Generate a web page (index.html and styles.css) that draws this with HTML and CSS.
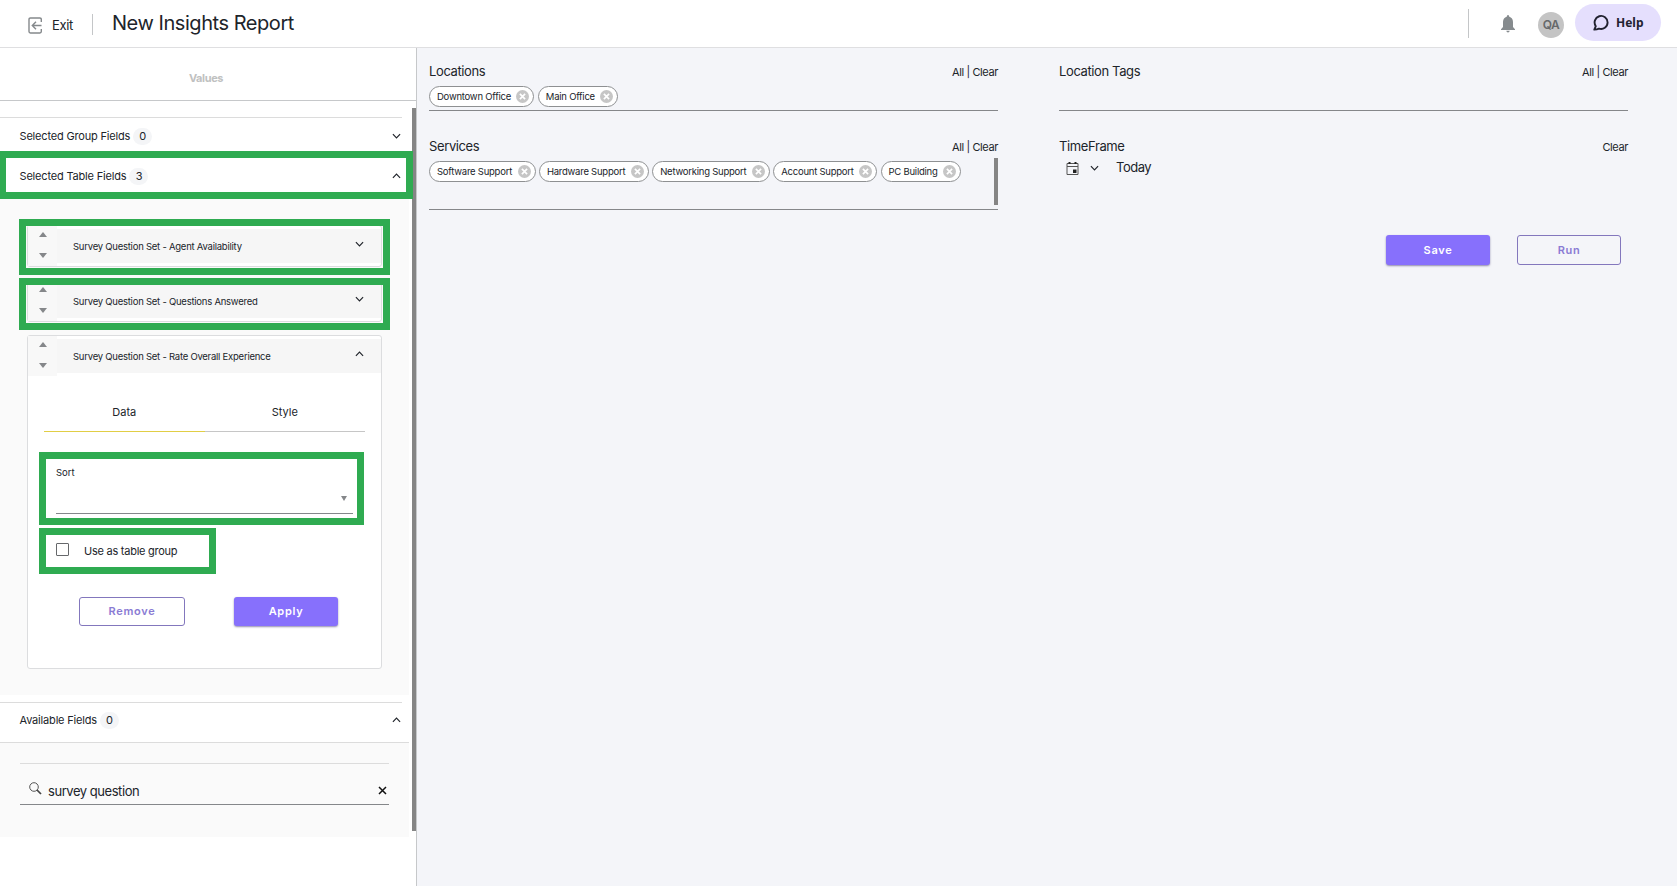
FILE: index.html
```html
<!DOCTYPE html>
<html lang="en">

<head>
	<meta charset="UTF-8">
	<title>New Insights Report</title>
	<link rel="stylesheet" href="styles.css">
</head>

<body>
	<!-- shared icons -->
	<svg class="defs">
		<symbol id="down" viewBox="0 0 10 6"><path d="M1 1l4 4 4-4" fill="none" stroke="currentColor" stroke-width="1.3" /></symbol>
		<symbol id="up" viewBox="0 0 10 6"><path d="M1 5l4-4 4 4" fill="none" stroke="currentColor" stroke-width="1.3" /></symbol>
		<symbol id="remove" viewBox="0 0 14 14"><circle cx="7" cy="7" r="7" fill="#c6c6c6" /><path d="M4.200 4.200l5.600 5.600M9.800 4.200l-5.600 5.600" stroke="#fff" stroke-width="1.800" /></symbol>
	</svg>

	<header class="top">
		<a class="exit" href="#">
			<svg width="15" height="17" viewBox="0 0 15 17" fill="none" stroke="#85898c" stroke-width="1.4">
				<path d="M13.3 5V2.4Q13.3 1 11.9 1H2.4Q1 1 1 2.4v12.2Q1 16 2.4 16h9.5q1.4 0 1.4-1.4V12M13.5 8.5H4.6M8 4.8L4.3 8.5 8 12.2" />
			</svg>
			<span>Exit</span>
		</a>
		<h1>New Insights Report</h1>
		<div class="tools">
			<svg class="bell" width="14" height="18" viewBox="0 0 14 18" fill="#868b8e">
				<path d="M7 0q1.2 0 1.3 1.7Q11.8 2.5 12 7v5l2 2.2v.8H0v-.8L2 12V7q.2-4.500 3.700-5.300Q5.800 0 7 0zM5.300 15.800h3.400Q8.500 17.500 7 17.500t-1.700-1.700z" />
			</svg>
			<span class="avatar">QA</span>
			<a class="help" href="#">
				<svg width="17" height="17" viewBox="0 0 17 17" fill="none" stroke="#222230" stroke-width="1.9" stroke-linejoin="round">
					<path d="M1.300 15.600l1.500-3.400A6.500 6.500 0 1 1 6 14.600q-2 .9-4.700 1z" />
				</svg>
				<span>Help</span>
			</a>
		</div>
	</header>

	<div class="page">
		<aside class="side">
			<div class="values">Values</div>
			<div class="scroller">
				<div class="row first">
					<span>Selected Group Fields</span><b>0</b>
					<svg class="chev"><use href="#down" /></svg>
				</div>
				<div class="row mark table-row">
					<span>Selected Table Fields</span><b>3</b>
					<svg class="chev"><use href="#up" /></svg>
				</div>

				<div class="fields">
					<div class="card small mark">
						<div class="card-head">
							<div class="arrows"><i class="up"></i><i class="down"></i></div>
							<div class="card-title"><span>Survey Question Set - Agent Availability</span><svg class="chev"><use href="#down" /></svg></div>
						</div>
					</div>
					<div class="card small mark second">
						<div class="card-head">
							<div class="arrows"><i class="up"></i><i class="down"></i></div>
							<div class="card-title"><span>Survey Question Set - Questions Answered</span><svg class="chev"><use href="#down" /></svg></div>
						</div>
					</div>
					<div class="card open">
						<div class="card-head">
							<div class="arrows"><i class="up"></i><i class="down"></i></div>
							<div class="card-title"><span>Survey Question Set - Rate Overall Experience</span><svg class="chev"><use href="#up" /></svg></div>
						</div>
						<div class="tabs">
							<span class="current">Data</span>
							<span>Style</span>
						</div>
						<div class="sort mark">
							<label>Sort</label>
							<div class="select"><i></i></div>
						</div>
						<label class="check mark"><i></i><span>Use as table group</span></label>
						<div class="card-btns">
							<button class="btn line">Remove</button>
							<button class="btn full">Apply</button>
						</div>
					</div>
				</div>

				<div class="row available">
					<span>Available Fields</span><b>0</b>
					<svg class="chev"><use href="#up" /></svg>
				</div>
				<div class="search-area">
					<div class="search">
						<svg width="13" height="13" viewBox="0 0 13 13" fill="none" stroke="#444"><circle cx="5" cy="5" r="4.300" stroke-width=".9" /><path d="M8 8l4 4" stroke-width="1.700" /></svg>
						<span>survey question</span>
						<svg class="clear" width="9" height="9" viewBox="0 0 9 9" stroke="#111" stroke-width="1.500"><path d="M1 1l7 7M8 1L1 8" /></svg>
					</div>
				</div>
				<div class="bar"></div>
			</div>
		</aside>

		<main class="main">
			<div class="filters">
				<section>
					<div class="label"><h2>Locations</h2><span>All | Clear</span></div>
					<div class="chips">
						<span class="chip">Downtown Office<svg><use href="#remove" /></svg></span>
						<span class="chip">Main Office<svg><use href="#remove" /></svg></span>
					</div>
				</section>
				<section>
					<div class="label"><h2>Location Tags</h2><span>All | Clear</span></div>
					<div class="chips"></div>
				</section>
				<section>
					<div class="label"><h2>Services</h2><span>All | Clear</span></div>
					<div class="chips tall">
						<span class="chip">Software Support<svg><use href="#remove" /></svg></span>
						<span class="chip">Hardware Support<svg><use href="#remove" /></svg></span>
						<span class="chip">Networking Support<svg><use href="#remove" /></svg></span>
						<span class="chip">Account Support<svg><use href="#remove" /></svg></span>
						<span class="chip">PC Building<svg><use href="#remove" /></svg></span>
						<div class="chips-bar"></div>
					</div>
				</section>
				<section>
					<div class="label"><h2>TimeFrame</h2><span>Clear</span></div>
					<div class="time">
						<svg width="13" height="13" viewBox="0 0 13 13"><path d="M1 1.500h11v11H1zM1 4.500h11" fill="none" stroke="#555" /><path d="M2.500 0h2v2h-2zM8.500 0h2v2h-2zM7 7.500h3.500V11H7z" fill="#222" /></svg>
						<svg class="chev"><use href="#down" /></svg>
						<span>Today</span>
					</div>
				</section>
			</div>
			<div class="actions">
				<button class="btn full">Save</button>
				<button class="btn line">Run</button>
			</div>
		</main>
	</div>
</body>

</html>
```
FILE: styles.css
```css
*,
*::before,
*::after {
	margin: 0;
	padding: 0;
	box-sizing: border-box;
}

body {
	height: 886px;
	overflow: hidden;
	background: #fff;
	color: #20242a;
	font-family: Inter, "Liberation Sans", sans-serif;
	font-size: 11px;
}

svg {
	flex: none;
}

a {
	color: inherit;
	text-decoration: none;
}

.defs {
	display: none;
}

/* header */
.top {
	display: flex;
	height: 48px;
	border-bottom: 1px solid #dfdfe1;
}

.exit {
	display: flex;
	align-items: center;
	gap: 9px;
	width: 93px;
	height: 21px;
	margin-top: 14px;
	padding-left: 28px;
	border-right: 1px solid #c4c6c8;
	font-size: 13px;
	letter-spacing: -.35px;
}

.exit svg {
	margin-top: 2px;
}

.exit span {
	margin-top: 1px;
}

h1 {
	margin-left: 19px;
	font-size: 20px;
	line-height: 46px;
	font-weight: 400;
	letter-spacing: -.45px;
}

.tools {
	display: flex;
	margin-left: auto;
	margin-right: 16px;
}

.bell {
	margin: 15px 36px 0 0;
}

.tools::before {
	content: "";
	width: 1px;
	height: 29px;
	margin: 9px 32px 0 0;
	background: #c4c6c8;
}

.avatar {
	width: 26px;
	height: 26px;
	margin: 12px 11px 0 -13px;
	border-radius: 50%;
	background: #c4c4c4;
	color: #66696b;
	font-size: 12px;
	font-weight: 600;
	line-height: 25px;
	text-align: center;
	letter-spacing: -.6px;
}

.help {
	display: flex;
	align-items: center;
	gap: 6px;
	width: 86px;
	height: 37px;
	margin-top: 4px;
	padding-left: 18px;
	border-radius: 19px;
	background: #e5dffd;
	color: #222230;
	font: bold 12px "Noto Sans", sans-serif;
}

.help svg {
	margin-bottom: 1px;
}

/* left panel */
.page {
	display: flex;
	height: 838px;
}

.side {
	width: 417px;
	border-right: 1px solid #c6c8ca;
}

.values {
	height: 53px;
	padding-right: 4px;
	border-bottom: 1px solid #c6c8ca;
	color: #bfc1c1;
	font-weight: 700;
	line-height: 60px;
	text-align: center;
	letter-spacing: -.4px;
}

.scroller {
	position: relative;
	padding-top: 16px;
}

.bar {
	position: absolute;
	top: 7px;
	right: 0;
	width: 4px;
	height: 723px;
	background: #858585;
}

.row {
	display: flex;
	align-items: center;
	width: 402px;
	padding: 0 1px 0 19.5px;
	letter-spacing: -.18px;
}

.row b {
	width: 19px;
	height: 17px;
	margin-left: 3px;
	border-radius: 9px;
	background: #f4f5f7;
	font-weight: 400;
	line-height: 17px;
	text-align: center;
}

.row .chev {
	margin-left: auto;
}

.chev {
	width: 9px;
	height: 6px;
}

.first {
	height: 41px;
	padding-bottom: 4px;
	border-top: 1px solid #dcdcdc;
}

.table-row {
	height: 34px;
	padding-top: 2px;
}

/* green frame round the highlighted parts */
.mark {
	position: relative;
}

.mark::after {
	content: "";
	position: absolute;
	z-index: 1;
	border: 7px solid #2fab51;
}

.table-row::after {
	top: -7px;
	left: 0;
	width: 413px;
	height: 48px;
	border-left-width: 6px;
}

.fields {
	width: 409px;
	height: 503px;
	padding: 33px 0 0 27px;
	background: #fafafa linear-gradient(#fff, #fff) no-repeat 0 0 / 409px 7px;
}

.card {
	width: 355px;
	border: 1px solid #dcdddf;
	border-radius: 3px;
	background: #fff;
}

.small {
	height: 42px;
	margin-bottom: 13px;
}

.small::after {
	top: -7px;
	left: -9px;
	width: 371px;
	height: 56px;
}

.second::after {
	top: -3px;
	height: 52px;
}

.card-head {
	display: flex;
	align-items: flex-start;
	height: 40px;
}

.arrows {
	display: flex;
	flex-direction: column;
	gap: 16px;
	width: 29px;
	height: 40px;
	padding: 6px 0 0 11px;
	background: #f8f8f8;
}

.arrows i {
	border: 4px solid transparent;
	width: 0;
}

.arrows .up {
	border-top: 0;
	border-bottom: 5px solid #85878a;
}

.arrows .down {
	border-bottom: 0;
	border-top: 5px solid #85878a;
}

.card-title {
	display: flex;
	align-items: center;
	justify-content: space-between;
	flex: 1;
	height: 34px;
	margin-top: 3px;
	padding: 1px 17px 0 16px;
	background: #f6f6f6;
	font-size: 9.5px;
	letter-spacing: -.24px;
}

.card-title .chev {
	margin-bottom: 5px;
}

.open {
	height: 334px;
}

.tabs {
	display: flex;
	width: 321px;
	height: 26px;
	margin: 30px 0 0 16px;
}

.tabs span {
	flex: 1;
	border-bottom: 1px solid #c6c6c6;
	line-height: 13px;
	text-align: center;
}

.tabs .current {
	border-color: #e1ce45;
}

.sort {
	width: 297px;
	height: 54px;
	margin: 28px 0 0 28px;
	padding-top: 6px;
	border-bottom: 1px solid #85878c;
	font-size: 9.5px;
}

.sort label {
	display: block;
	line-height: 13px;
}

.select {
	display: flex;
	justify-content: flex-end;
	padding: 17px 6px 0 0;
}

.select i {
	border: 3px solid transparent;
	border-top: 5px solid #85878a;
	border-bottom: 0;
}

.sort::after {
	top: -8px;
	left: -17px;
	width: 325px;
	height: 73px;
}

.check {
	display: flex;
	width: 150px;
	height: 17px;
	margin: 29px 0 0 28px;
}

.check i {
	width: 13px;
	height: 13px;
	margin-right: 15px;
	border: 1px solid #66686b;
	border-radius: 1px;
}

.check span {
	line-height: 17px;
	letter-spacing: -.25px;
}

.check::after {
	top: -15px;
	left: -17px;
	width: 177px;
	height: 46px;
}

.card-btns {
	display: flex;
	gap: 49px;
	margin: 37px 0 0 51px;
}

.btn {
	width: 104px;
	height: 29px;
	padding-bottom: 1px;
	border-radius: 3px;
	font: 600 11px Inter, sans-serif;
	letter-spacing: .7px;
}

.card-btns .line {
	width: 106px;
}

.full {
	border: 0;
	background: #8770fc;
	color: #fff;
	box-shadow: 0 1px 2px rgba(60, 50, 110, .55);
}

.line {
	border: 1px solid #8377bd;
	background: transparent;
	color: #8a7bd4;
}

.available {
	height: 40px;
	padding-bottom: 5px;
	border-top: 1px solid #dcdcdc;
	margin-top: 7px;
}

.search-area {
	width: 409px;
	height: 95px;
	padding: 20px 20px 0;
	border-top: 1px solid #dcdcdc;
	background: #fafafa;
}

.search {
	display: flex;
	align-items: center;
	height: 42px;
	padding: 13px 2px 0 9px;
	border-top: 1px solid #dcdcdc;
	border-bottom: 1px solid #85878a;
	font-size: 13px;
	letter-spacing: -.45px;
}

.search svg {
	margin: 0 6px 5px 0;
}

.search .clear {
	margin: 0 0 0 auto;
}

/* right part */
.main {
	flex: 1;
	padding: 14px 49px 0 12px;
	background: #f4f5f9;
}

.filters {
	display: grid;
	grid-template-columns: 569px 569px;
	column-gap: 61px;
	row-gap: 26px;
}

.label {
	display: flex;
	align-items: center;
	justify-content: space-between;
	height: 20px;
	padding-bottom: 2px;
	letter-spacing: -.4px;
}

.label h2 {
	font-size: 13px;
	font-weight: 400;
	letter-spacing: -.38px;
}

.label span {
	margin-top: 1px;
}

.chips {
	position: relative;
	display: flex;
	align-items: flex-start;
	gap: 3.4px;
	height: 29px;
	padding-top: 4px;
	border-bottom: 1px solid #85878a;
}

.tall {
	height: 53px;
}

.chips-bar {
	position: absolute;
	top: 1px;
	right: 0;
	width: 4px;
	height: 47px;
	background: #858585;
}

.chip {
	display: flex;
	align-items: center;
	height: 21px;
	padding: 0 4px 0 7px;
	border: 1px solid #8e9092;
	border-radius: 11px;
	background: #fff;
	font-size: 9.5px;
	letter-spacing: -.24px;
	white-space: nowrap;
}

.chip svg {
	width: 13px;
	height: 13px;
	margin: 0 0 1px 5.5px;
}

.time {
	display: flex;
	align-items: center;
	height: 22px;
	padding-left: 6.5px;
}

.time .chev {
	margin: 0 17.5px 0 11px;
}

.time span {
	margin-bottom: 2px;
	font-size: 13px;
	letter-spacing: -.5px;
}

.actions {
	display: flex;
	justify-content: flex-end;
	gap: 27px;
	margin: 25px 7px 0 0;
}

.actions .btn {
	height: 30px;
}
```
